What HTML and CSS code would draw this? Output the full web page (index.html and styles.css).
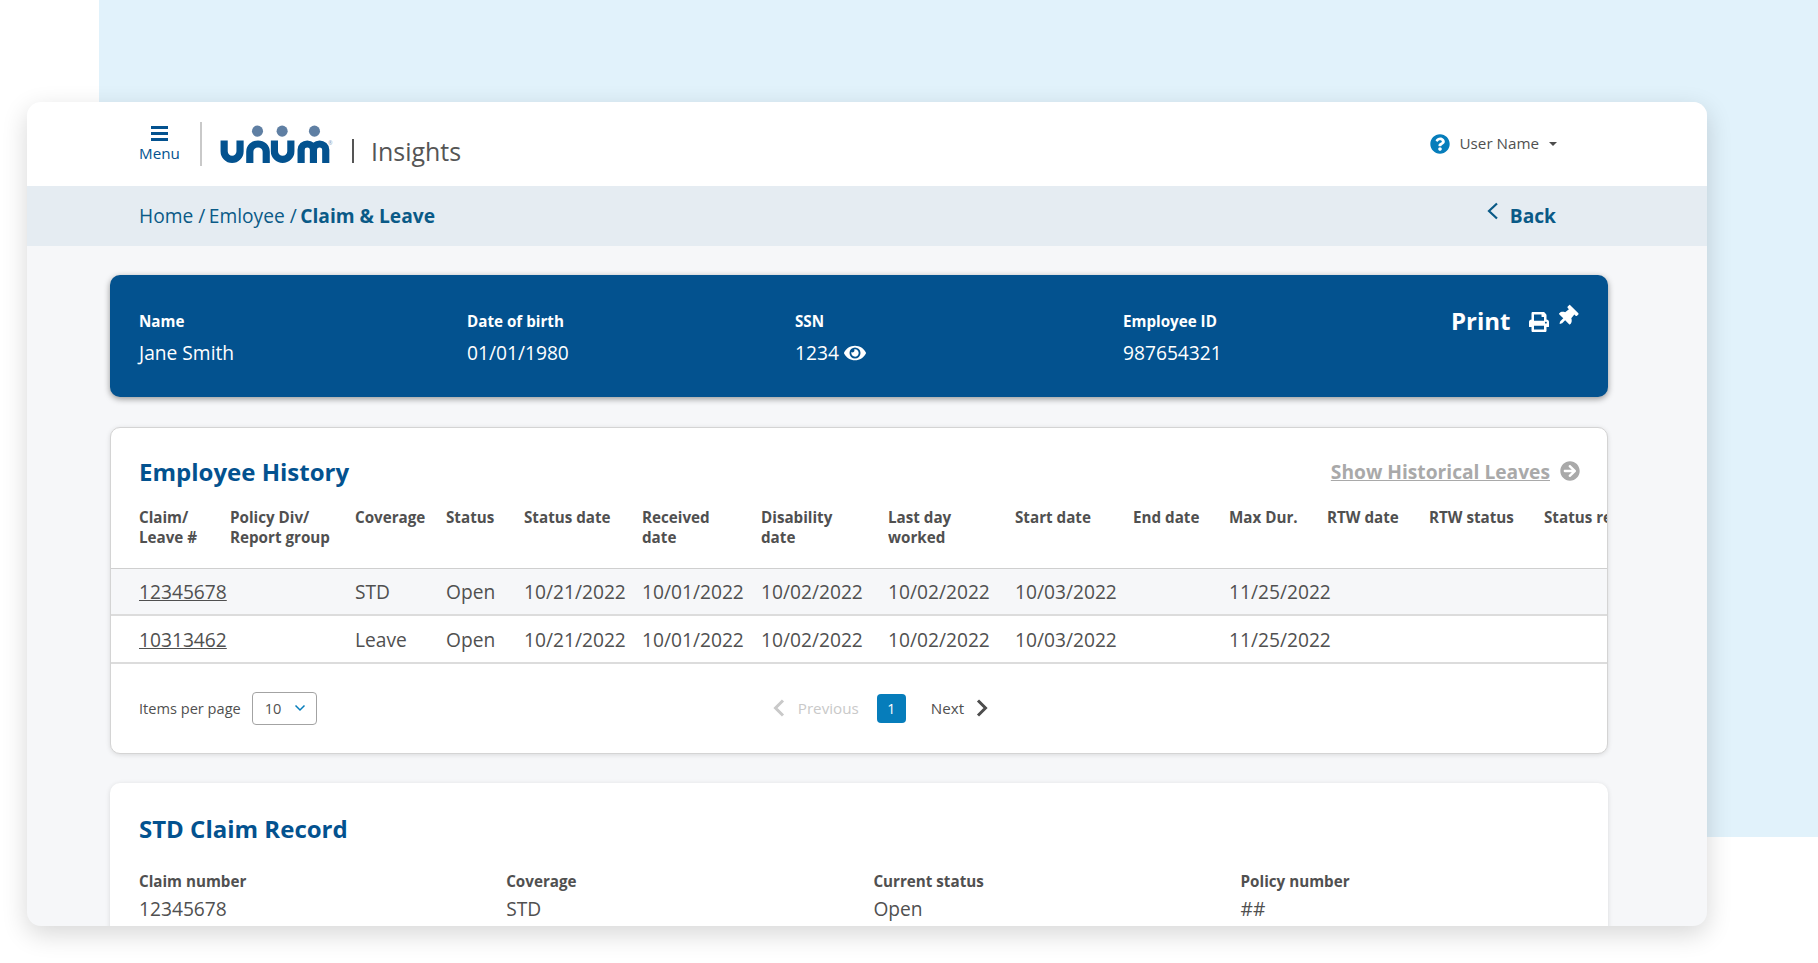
FILE: index.html
```html
<!DOCTYPE html>
<html lang="en">
<head>
    <meta charset="UTF-8">
    <meta name="viewport" content="width=device-width, initial-scale=1.0">
    <title>Unum Insights - Claim &amp; Leave</title>
    <link rel="stylesheet" href="styles.css">
</head>
<body>
    <div class="fondo"></div>

    <div class="ventana">
        <header class="cabecera">
            <a class="menu">
                <span class="menu-icono"><i></i><i></i><i></i></span>
                <span>Menu</span>
            </a>
            <svg class="logo" viewBox="0 0 110 38" aria-label="Unum">
                <circle cx="36" cy="6" r="5.4" fill="#5f7fa3"/>
                <circle cx="60" cy="6" r="5.4" fill="#5f7fa3"/>
                <circle cx="91.5" cy="6" r="5.4" fill="#5f7fa3"/>
                <g fill="none" stroke="#03528f" stroke-width="7">
                    <path d="M3.5 15V25.5a7.75 8 0 0 0 15.5 0V15"/>
                    <path d="M28.5 37V26a8 7.500 0 0 1 16 0V37"/>
                    <path d="M52.5 15V25.5a8 8 0 0 0 16 0V15"/>
                    <path d="M78.5 37V24a6 5.500 0 0 1 12 0V37M90.500 24a6 5.500 0 0 1 12 0V37"/>
                </g>
                <text x="105" y="19" class="logo-r">®</text>
            </svg>
            <span class="producto">Insights</span>
            <div class="usuario">
                <svg class="ayuda" viewBox="0 0 512 512"><path fill="#067dbb" d="M504 256c0 136.997-111.043 248-248 248S8 392.997 8 256C8 119.083 119.043 8 256 8s248 111.083 248 248zM262.655 90c-54.497 0-89.255 22.957-116.549 63.758-3.536 5.286-2.353 12.415 2.715 16.258l34.699 26.31c5.205 3.947 12.621 3.008 16.665-2.122 17.864-22.658 30.113-35.797 57.303-35.797 20.429 0 45.698 13.148 45.698 32.958 0 14.976-12.363 22.667-32.534 33.976C247.128 238.528 216 254.941 216 296v4c0 6.627 5.373 12 12 12h56c6.627 0 12-5.373 12-12v-1.333c0-28.462 83.186-29.647 83.186-106.667 0-58.002-60.165-102-116.531-102zM256 338c-25.365 0-46 20.635-46 46 0 25.364 20.635 46 46 46s46-20.636 46-46c0-25.365-20.635-46-46-46z"/></svg>
                <span class="usuario-nombre">User Name</span>
                <i class="caret"></i>
            </div>
        </header>

        <nav class="migas">
            <div class="migas-lista"><a>Home /</a><a>Emloyee /</a><b>Claim &amp; Leave</b></div>
            <a class="volver">
                <svg viewBox="0 0 12 18"><path d="M10 1.500L2 9l8 7.500" fill="none" stroke="#0a5a87" stroke-width="2.200"/></svg>
                <b>Back</b>
            </a>
        </nav>

        <main class="contenido">
            <section class="banner">
                <div><h4>Name</h4><p>Jane Smith</p></div>
                <div><h4>Date of birth</h4><p>01/01/1980</p></div>
                <div>
                    <h4>SSN</h4>
                    <p class="ssn">1234
                        <svg viewBox="0 0 576 512"><path fill="#fff" d="M572.52 241.4C518.29 135.59 410.93 64 288 64S57.68 135.64 3.48 241.41a32.35 32.35 0 0 0 0 29.19C57.71 376.41 165.07 448 288 448s230.32-71.64 284.52-177.41a32.35 32.35 0 0 0 0-29.19zM288 400a144 144 0 1 1 144-144 143.93 143.93 0 0 1-144 144zm0-240a95.31 95.31 0 0 0-25.31 3.79 47.85 47.85 0 0 1-66.9 66.9A95.78 95.78 0 1 0 288 160z"/></svg>
                    </p>
                </div>
                <div><h4>Employee ID</h4><p>987654321</p></div>
                <div class="imprimir">
                    <span>Print</span>
                    <svg class="icono-print" viewBox="0 0 512 512"><path fill="#fff" d="M448 192V77.25c0-8.49-3.37-16.62-9.37-22.63L393.37 9.37c-6-6-14.14-9.37-22.63-9.37H96C78.33 0 64 14.33 64 32v160c-35.35 0-64 28.65-64 64v112c0 8.84 7.16 16 16 16h48v96c0 17.67 14.33 32 32 32h320c17.67 0 32-14.33 32-32v-96h48c8.84 0 16-7.16 16-16V256c0-35.35-28.65-64-64-64zm-64 256H128v-96h256v96zm0-224H128V64h192v48c0 8.84 7.16 16 16 16h48v96zm48 72c-13.25 0-24-10.75-24-24 0-13.26 10.75-24 24-24s24 10.74 24 24c0 13.25-10.75 24-24 24z"/></svg>
                    <svg class="icono-pin" viewBox="0 0 384 512"><path fill="#fff" d="M298.028 214.267L285.793 96H328c13.255 0 24-10.745 24-24V24c0-13.255-10.745-24-24-24H56C42.745 0 32 10.745 32 24v48c0 13.255 10.745 24 24 24h42.207L85.972 214.267C37.465 236.82 0 277.261 0 328c0 13.255 10.745 24 24 24h136v104.007c0 1.242.289 2.467.845 3.578l24 48c2.941 5.882 11.364 5.893 14.311 0l24-48a8.008 8.008 0 0 0 .845-3.578V352h136c13.255 0 24-10.745 24-24-.001-51.183-37.983-91.42-85.973-113.733z"/></svg>
                </div>
            </section>

            <section class="tarjeta historial">
                <div class="historial-titulo">
                    <h2>Employee History</h2>
                    <a class="historicos">
                        <span>Show Historical Leaves</span>
                        <svg viewBox="0 0 512 512"><path fill="#a9a9a9" d="M256 8c137 0 248 111 248 248S393 504 256 504 8 393 8 256 119 8 256 8zm-28.9 143.6l75.5 72.4H120c-13.3 0-24 10.7-24 24v16c0 13.3 10.7 24 24 24h182.6l-75.5 72.4c-9.7 9.3-9.9 24.8-.4 34.3l11 10.9c9.4 9.4 24.6 9.4 33.9 0L404.3 273c9.4-9.4 9.4-24.6 0-33.9L271.6 106.3c-9.4-9.4-24.6-9.4-33.9 0l-11 10.9c-9.5 9.6-9.3 25.1.4 34.4z"/></svg>
                    </a>
                </div>

                <table class="tabla">
                    <colgroup>
                        <col class="c-claim"><col class="c-policy"><col class="c-coverage"><col class="c-status">
                        <col class="c-fecha"><col class="c-recibido"><col class="c-ancha"><col class="c-ancha">
                        <col class="c-fecha"><col class="c-end"><col class="c-max"><col class="c-rtw">
                        <col class="c-rtws"><col class="c-resto">
                    </colgroup>
                    <thead>
                        <tr>
                            <th>Claim/<br>Leave #</th>
                            <th>Policy Div/<br>Report group</th>
                            <th>Coverage</th>
                            <th>Status</th>
                            <th>Status date</th>
                            <th>Received<br>date</th>
                            <th>Disability<br>date</th>
                            <th>Last day<br>worked</th>
                            <th>Start date</th>
                            <th>End date</th>
                            <th>Max Dur.</th>
                            <th>RTW date</th>
                            <th>RTW status</th>
                            <th>Status reason</th>
                        </tr>
                    </thead>
                    <tbody>
                        <tr class="fila-gris">
                            <td><a class="enlace">12345678</a></td>
                            <td></td>
                            <td>STD</td>
                            <td>Open</td>
                            <td>10/21/2022</td>
                            <td>10/01/2022</td>
                            <td>10/02/2022</td>
                            <td>10/02/2022</td>
                            <td>10/03/2022</td>
                            <td></td>
                            <td>11/25/2022</td>
                            <td></td>
                            <td></td>
                            <td></td>
                        </tr>
                        <tr class="fila-alta">
                            <td><a class="enlace">10313462</a></td>
                            <td></td>
                            <td>Leave</td>
                            <td>Open</td>
                            <td>10/21/2022</td>
                            <td>10/01/2022</td>
                            <td>10/02/2022</td>
                            <td>10/02/2022</td>
                            <td>10/03/2022</td>
                            <td></td>
                            <td>11/25/2022</td>
                            <td></td>
                            <td></td>
                            <td></td>
                        </tr>
                    </tbody>
                </table>

                <div class="pie-tabla">
                    <div class="por-pagina">
                        <span>Items per page</span>
                        <div class="selector">
                            <span>10</span>
                            <svg viewBox="0 0 12 8"><path d="M1.500 1.500L6 6l4.500-4.500" fill="none" stroke="#067dbb" stroke-width="1.500"/></svg>
                        </div>
                    </div>
                    <div class="paginas">
                        <a class="anterior">
                            <svg viewBox="0 0 12 18"><path d="M10 1.500L2.500 9l7.500 7.500" fill="none" stroke="#c9c9c9" stroke-width="3"/></svg>
                            <span>Previous</span>
                        </a>
                        <span class="pagina-activa">1</span>
                        <a class="siguiente">
                            <span>Next</span>
                            <svg viewBox="0 0 12 18"><path d="M2 1.500L9.500 9 2 16.500" fill="none" stroke="#4d4d4d" stroke-width="3"/></svg>
                        </a>
                    </div>
                </div>
            </section>

            <section class="tarjeta registro">
                <h2>STD Claim Record</h2>
                <div class="datos">
                    <div><h5>Claim number</h5><p>12345678</p></div>
                    <div><h5>Coverage</h5><p>STD</p></div>
                    <div><h5>Current status</h5><p>Open</p></div>
                    <div><h5>Policy number</h5><p>##</p></div>
                </div>
            </section>
        </main>
    </div>
</body>
</html>
```

FILE: styles.css
```css
* {
    box-sizing: border-box;
}

body {
    margin: 0;
    height: 963px;
    overflow: hidden;
    position: relative;
    background-color: white;
    font-family: "Open Sans", "Noto Sans", sans-serif;
    color: #505050;
}

h2, h4, h5, p {
    margin: 0;
}

.fondo {
    position: absolute;
    left: 99px;
    top: 0;
    right: 0;
    height: 837px;
    background-color: #e1f2fb;
}

.ventana {
    position: absolute;
    left: 27px;
    top: 102px;
    width: 1680px;
    height: 824px;
    overflow: hidden;
    border-radius: 14px;
    background-color: #f6f7f9;
    box-shadow: 0 8px 26px rgba(0,0,0,0.16);
}

/* cabecera */
.cabecera {
    height: 84px;
    background-color: white;
    display: flex;
    align-items: center;
    padding-left: 112px;
    padding-right: 150px;
    position: relative;
}

.menu {
    width: 41px;
    display: flex;
    flex-direction: column;
    align-items: center;
    font-size: 15.200px;
    line-height: 20px;
    color: #03528f;
    margin-top: 1px;
}

.menu-icono {
    display: flex;
    flex-direction: column;
    gap: 3px;
    margin-bottom: 2px;
}

.menu-icono i {
    display: block;
    width: 17px;
    height: 3px;
    background-color: #03528f;
}

.logo {
    width: 114px;
    height: 39px;
    margin-left: 40px;
    overflow: visible;
}

/* raya entre el menu y el logo */
.menu::after {
    content: "";
    position: absolute;
    left: 173px;
    top: 20px;
    width: 2px;
    height: 44px;
    background-color: #c9c9c9;
}

.logo-r {
    font-size: 5px;
    fill: #7f9dbd;
}

.producto {
    margin-left: 18px;
    padding-left: 17px;
    font-size: 24.960px;
    line-height: 24px;
    margin-top: 14px;
    border-left: 2px solid #555;
    color: #555;
}

.usuario {
    margin-left: auto;
    display: flex;
    align-items: center;
    font-size: 15.200px;
}

.usuario-nombre {
    margin-top: -2px;
}

.ayuda {
    width: 20px;
    height: 20px;
    margin-right: 10px;
}

.caret {
    width: 0;
    height: 0;
    margin-left: 10px;
    border-left: 4px solid transparent;
    border-right: 4px solid transparent;
    border-top: 4px solid #4d4d4d;
}

/* migas */
.migas {
    height: 60px;
    background-color: #e5ecf2;
    display: flex;
    align-items: center;
    justify-content: space-between;
    padding: 0 151px 2px 112px;
    font-size: 19.200px;
    color: #0a5a87;
}

.migas-lista {
    display: flex;
    gap: 3.500px;
}

.migas b {
    font-weight: 700;
}

.volver {
    display: flex;
    align-items: center;
    gap: 11px;
}

.volver svg {
    width: 12px;
    height: 18px;
    margin-top: -9px;
}

/* contenido */
.contenido {
    padding: 29px 99px 0 83px;
    display: flex;
    flex-direction: column;
    gap: 30px;
}

.banner {
    height: 122px;
    border-radius: 10px;
    background-color: #03528f;
    color: white;
    box-shadow: 0 2px 6px rgba(0,0,0,0.4);
    display: grid;
    grid-template-columns: repeat(4, 328px) 1fr;
    padding: 35px 0 0 29px;
}

.banner h4 {
    font-size: 15.200px;
    line-height: 22px;
    font-weight: 700;
}

.banner p {
    font-size: 19.200px;
    line-height: 26px;
    margin-top: 8px;
}

.ssn {
    display: flex;
    align-items: center;
    gap: 5px;
}

.ssn svg {
    width: 22px;
    height: 20px;
}

.imprimir {
    display: flex;
    align-items: flex-start;
    font-size: 24px;
    font-weight: 700;
    line-height: 32px;
    position: relative;
    top: -5px;
}

.icono-print {
    width: 20px;
    height: 20px;
    margin-left: 19px;
    margin-top: 7px;
}

.icono-pin {
    width: 16px;
    height: 21px;
    margin-left: 10px;
    margin-top: 1px;
    transform: rotate(45deg);
}

/* tarjetas */
.tarjeta {
    background-color: white;
    border-radius: 10px;
    box-shadow: 0 1px 5px rgba(0,0,0,0.12);
}

.historial {
    height: 327px;
    border: 1px solid #d4d4d4;
    overflow: hidden;
    margin-bottom: -1px;
}

.historial-titulo {
    display: flex;
    align-items: center;
    justify-content: space-between;
    padding: 14px 27px 0 28px;
    height: 72px;
}

.historial-titulo h2 {
    margin-top: 2px;
}

h2 {
    font-size: 24px;
    font-weight: 700;
    line-height: 34px;
    color: #03528f;
}

.historicos {
    display: flex;
    align-items: center;
    gap: 10px;
    font-size: 19.200px;
    font-weight: 700;
    color: #a9a9a9;
    text-decoration: underline;
}

.historicos svg {
    width: 20px;
    height: 20px;
}

.tabla {
    table-layout: fixed;
    border-collapse: collapse;
    width: 1583px;
}

.c-claim { width: 119px; }
.c-policy { width: 125px; }
.c-coverage { width: 91px; }
.c-status { width: 78px; }
.c-fecha { width: 118px; }
.c-recibido { width: 119px; }
.c-ancha { width: 127px; }
.c-end { width: 96px; }
.c-max { width: 98px; }
.c-rtw { width: 102px; }
.c-rtws { width: 115px; }
.c-resto { width: 150px; }

.tabla th {
    height: 68px;
    padding: 7px 0 0;
    vertical-align: top;
    text-align: left;
    font-size: 15.200px;
    line-height: 20px;
    font-weight: 700;
    white-space: nowrap;
    overflow: hidden;
    border-bottom: 1px solid #cfcfcf;
}

.tabla td {
    height: 47px;
    padding: 0;
    font-size: 19.200px;
    white-space: nowrap;
    border-bottom: 2px solid #dcdcdc;
}

.tabla .fila-alta td {
    height: 48px;
}

.tabla th:first-child,
.tabla td:first-child {
    padding-left: 28px;
}

.fila-gris {
    background-color: #f6f7f9;
}

.enlace {
    text-decoration: underline;
}

.pie-tabla {
    height: 88px;
    padding-left: 28px;
    display: flex;
    align-items: center;
    font-size: 15.200px;
}

.por-pagina {
    display: flex;
    align-items: center;
    gap: 11px;
    font-size: 14.600px;
}

.selector {
    width: 65px;
    height: 33px;
    border: 1px solid #a3a3a3;
    border-radius: 4px;
    display: flex;
    align-items: center;
    justify-content: space-between;
    padding: 0 10px 0 12px;
}

.selector svg {
    width: 12px;
    height: 8px;
}

.paginas {
    display: flex;
    align-items: center;
    margin-left: 456px;
}

.anterior {
    display: flex;
    align-items: center;
    gap: 13px;
    color: #c9c9c9;
}

.anterior svg,
.siguiente svg {
    width: 12px;
    height: 18px;
}

.pagina-activa {
    width: 29px;
    height: 29px;
    margin-left: 18px;
    margin-right: 25px;
    border-radius: 4px;
    background-color: #067dbb;
    color: white;
    font-size: 14px;
    display: flex;
    align-items: center;
    justify-content: center;
}

.siguiente {
    display: flex;
    align-items: center;
    gap: 12px;
}

.registro {
    height: 300px;
    padding: 29px 28px 0 29px;
}

.datos {
    display: grid;
    grid-template-columns: repeat(4, 367.200px);
    margin-top: 24px;
}

.datos h5 {
    font-size: 15.200px;
    line-height: 22px;
    font-weight: 700;
}

.datos p {
    font-size: 19.200px;
    line-height: 26px;
    margin-top: 4px;
}
```
